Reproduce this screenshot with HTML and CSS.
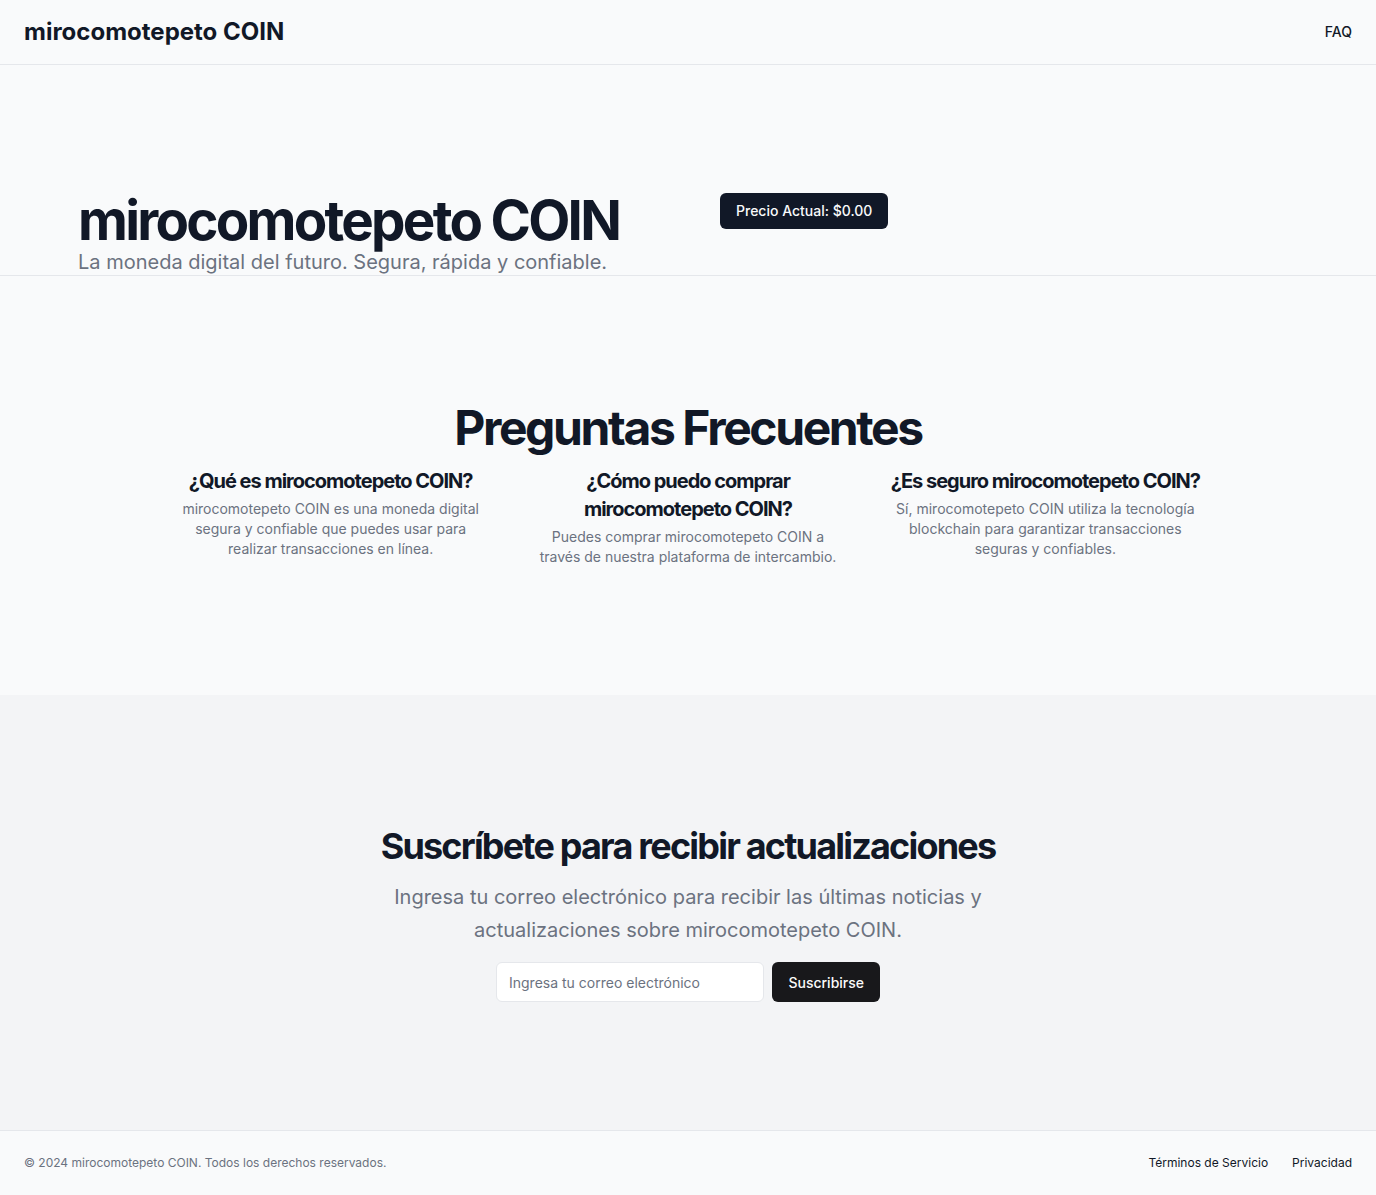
FILE: index.html
```html
<!DOCTYPE html>
<html lang="es">
<head>
<meta charset="utf-8">
<title>mirocomotepeto COIN</title>
<link rel="stylesheet" href="styles.css">
</head>
<body>
<header class="site-header">
  <a class="logo" href="#">mirocomotepeto COIN</a>
  <nav class="nav">
    <a class="nav-link" href="#">FAQ</a>
  </nav>
</header>
<main>
  <section class="hero">
    <div class="hero-inner">
      <div class="hero-text">
        <h1 class="hero-title">mirocomotepeto COIN</h1>
        <p class="hero-sub">La moneda digital del futuro. Segura, rápida y confiable.</p>
      </div>
      <div class="hero-side">
        <span class="price-badge">Precio Actual: $0.00</span>
      </div>
    </div>
  </section>
  <section class="faq">
    <h2 class="faq-title">Preguntas Frecuentes</h2>
    <div class="faq-grid">
      <div class="faq-item">
        <h3 class="faq-q">¿Qué es mirocomotepeto COIN?</h3>
        <p class="faq-a">mirocomotepeto COIN es una moneda digital segura y confiable que puedes usar para realizar transacciones en línea.</p>
      </div>
      <div class="faq-item">
        <h3 class="faq-q">¿Cómo puedo comprar mirocomotepeto COIN?</h3>
        <p class="faq-a">Puedes comprar mirocomotepeto COIN a través de nuestra plataforma de intercambio.</p>
      </div>
      <div class="faq-item">
        <h3 class="faq-q">¿Es seguro mirocomotepeto COIN?</h3>
        <p class="faq-a">Sí, mirocomotepeto COIN utiliza la tecnología blockchain para garantizar transacciones seguras y confiables.</p>
      </div>
    </div>
  </section>
  <section class="subscribe">
    <h2 class="sub-title">Suscríbete para recibir actualizaciones</h2>
    <p class="sub-text">Ingresa tu correo electrónico para recibir las últimas noticias y actualizaciones sobre mirocomotepeto COIN.</p>
    <form class="sub-form">
      <input class="sub-input" type="email" placeholder="Ingresa tu correo electrónico">
      <button class="sub-button" type="submit">Suscribirse</button>
    </form>
  </section>
</main>
<footer class="site-footer">
  <p class="copyright">© 2024 mirocomotepeto COIN. Todos los derechos reservados.</p>
  <nav class="footer-nav">
    <a class="footer-link" href="#">Términos de Servicio</a>
    <a class="footer-link" href="#">Privacidad</a>
  </nav>
</footer>
</body>
</html>
```

FILE: styles.css
```css
* { box-sizing: border-box; }

body {
  margin: 0;
  font-family: Inter, "Noto Sans", Arial, sans-serif;
  background: #f9fafb;
  color: #111827;
}

a { text-decoration: none; color: inherit; }

.site-header {
  display: flex;
  align-items: center;
  justify-content: space-between;
  height: 65px;
  padding: 0 24px;
  border-bottom: 1px solid #e5e7eb;
}

.logo {
  font-size: 24px;
  line-height: 32px;
  font-weight: 700;
  color: #111827;
}

.nav-link {
  display: block;
  font-size: 14px;
  line-height: 20px;
  font-weight: 500;
  color: #111827;
  margin-top: -1px;
}

.hero {
  height: 211px;
  padding-top: 128px;
  border-bottom: 1px solid #e5e7eb;
}

.hero-inner {
  max-width: 1280px;
  margin: 0 auto;
  padding: 0 30px;
  display: grid;
  grid-template-columns: 1fr 1fr;
  column-gap: 64px;
}

.hero-title {
  margin: 0;
  font-size: 54.7px;
  line-height: 1;
  font-weight: 700;
  letter-spacing: -0.05em;
  color: #111827;
}

.hero-sub {
  margin: 0;
  font-size: 20px;
  line-height: 28px;
  color: #6b7280;
}

.hero-side {
  display: flex;
  align-items: flex-start;
}

.price-badge {
  display: inline-block;
  background: #111827;
  color: #f9fafb;
  font-size: 14px;
  line-height: 20px;
  font-weight: 500;
  padding: 8px 16px;
  border-radius: 6px;
}

.faq {
  padding: 128px 24px;
  display: flex;
  flex-direction: column;
  align-items: center;
}

.faq-title {
  margin: 0;
  font-size: 48px;
  line-height: 1;
  font-weight: 700;
  letter-spacing: -0.05em;
  text-align: center;
  color: #111827;
}

.faq-grid {
  margin-top: 15px;
  width: 100%;
  max-width: 1024px;
  display: grid;
  grid-template-columns: repeat(3, 1fr);
  column-gap: 48px;
}

.faq-item {
  text-align: center;
}

.faq-q {
  margin: 0;
  font-size: 20px;
  line-height: 28px;
  font-weight: 700;
  letter-spacing: -0.05em;
  color: #111827;
}

.faq-a {
  margin: 4px 0 0;
  font-size: 14px;
  line-height: 20px;
  color: #6b7280;
}

.subscribe {
  background: #f3f4f6;
  padding: 128px 24px;
  display: flex;
  flex-direction: column;
  align-items: center;
  text-align: center;
}

.sub-title {
  margin: 0;
  font-size: 36px;
  line-height: 46px;
  font-weight: 700;
  letter-spacing: -0.05em;
  color: #111827;
}

.sub-text {
  margin: 12px 0 0;
  max-width: 600px;
  font-size: 20px;
  line-height: 32.5px;
  color: #6b7280;
}

.sub-form {
  margin-top: 16px;
  width: 100%;
  max-width: 384px;
  display: flex;
  gap: 8px;
}

.sub-input {
  flex: 1;
  min-width: 0;
  height: 40px;
  padding: 8px 12px;
  font-family: inherit;
  font-size: 14px;
  background: #ffffff;
  border: 1px solid #e5e7eb;
  border-radius: 6px;
  color: #111827;
}

.sub-input::placeholder { color: #6b7280; }

.sub-button {
  height: 40px;
  padding: 0 16px;
  font-family: inherit;
  font-size: 14px;
  font-weight: 500;
  background: #18181b;
  color: #fafafa;
  border: none;
  border-radius: 6px;
}

.site-footer {
  display: flex;
  align-items: center;
  justify-content: space-between;
  padding: 24px;
  border-top: 1px solid #e5e7eb;
}

.copyright {
  margin: 0;
  font-size: 12px;
  line-height: 16px;
  color: #6b7280;
}

.footer-nav {
  display: flex;
  gap: 24px;
}

.footer-link {
  font-size: 12px;
  line-height: 16px;
  color: #111827;
}
```
